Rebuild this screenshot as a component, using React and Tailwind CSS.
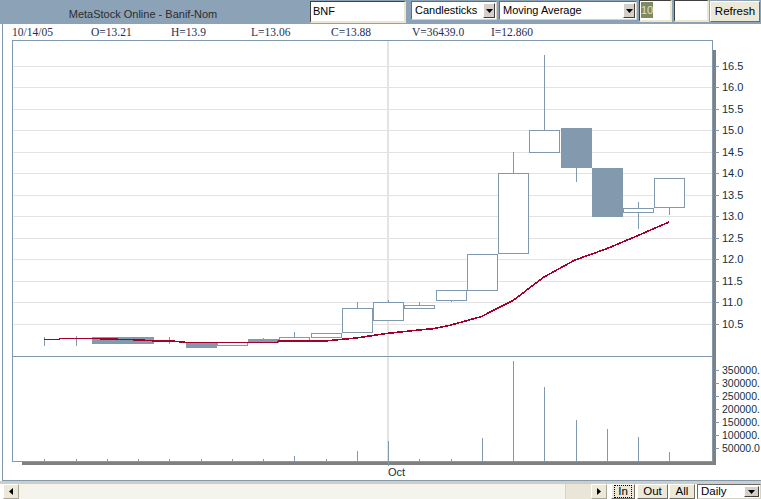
import React from "react";

const LINE = "#8099ae";
const FILL = "#8299ae";
const AX = "#12303f";

const X0 = 44.3;
const DX = 31.25;
const cx = (i) => X0 + DX * i;

const candles = [
  { t: "d", hi: 336.5, lo: 345.5 },
  { t: "d", hi: 336, lo: 345.5 },
  { t: "f", top: 337, bot: 342.7, lo: 343.7 },
  { t: "f", top: 337, bot: 342.7, lo: 343.7 },
  { t: "d", hi: 337, lo: 343.7 },
  { t: "f", top: 342, bot: 346.7, lo: 347.7 },
  { t: "h", top: 342.3, bot: 345.3 },
  { t: "f", top: 339, bot: 342.3, hi: 338 },
  { t: "h", top: 337, bot: 339.7, hi: 332 },
  { t: "h", top: 333.3, bot: 337.3 },
  { t: "h", top: 308.3, bot: 332.3, hi: 302.3 },
  { t: "h", top: 302.3, bot: 320.3, hi: 300 },
  { t: "h", top: 305.3, bot: 308.3, hi: 302.3 },
  { t: "h", top: 290.3, bot: 300.3, lo: 301.7 },
  { t: "h", top: 254, bot: 290.3 },
  { t: "h", top: 173.3, bot: 253, hi: 152 },
  { t: "h", top: 130, bot: 152.3, hi: 55 },
  { t: "f", top: 128, bot: 166.7, lo: 181.7 },
  { t: "f", top: 168, bot: 215.7, lo: 217 },
  { t: "h", top: 208.3, bot: 212.3, hi: 202, lo: 229.3 },
  { t: "h", top: 178, bot: 207.3, lo: 214.7 },
];

const volTops = [
  459, 459, 459, 459, 459, 459, 459, 459, 456, 459, 451, 441, 459, 459, 438,
  361, 387, 420, 429, 437, 452,
];

const ma = [
  [44, 339.3], [59, 339.3], [60, 338.3], [75, 338.3], [91, 338.3], [106, 339],
  [137, 339.8], [152, 340.7], [169, 340.7], [185, 342.3], [200, 342.3],
  [231, 342.3], [262, 342.3], [277, 342.3], [279, 341], [294, 341], [325, 341],
  [330, 340.5], [356, 338], [388, 333.3], [419, 330], [433, 328.7], [450, 325.3],
  [481, 316.7], [513, 300.5], [544, 277], [575, 260], [606, 249], [638, 235.5],
  [669, 222],
];

const priceLabels = ["16.5", "16.0", "15.5", "15.0", "14.5", "14.0", "13.5", "13.0", "12.5", "12.0", "11.5", "11.0", "10.5"];
const py = (p) => 216 - (p - 13) * 43;
const volLabels = ["350000.", "300000.", "250000.", "200000.", "150000.", "100000.", "50000.0"];

function Chart() {
  return (
    <svg width="749" height="440" viewBox="12 40 749 440" className="block" shapeRendering="crispEdges">
      {/* horizontal grid */}
      {priceLabels.map((p) => {
        const y = Math.round(py(parseFloat(p))) + 0.5;
        return <line key={"g" + p} x1={13} x2={712} y1={y} y2={y} stroke="#e3e3e3" strokeWidth="1" />;
      })}
      {/* vertical grid (Oct) */}
      <rect x="387" y="41" width="2" height="420" fill="#e4e4e4" />

      {/* volume bars */}
      {volTops.map((t, i) => {
        const x = Math.round(cx(i)) + 0.5;
        return <line key={"v" + i} x1={x} x2={x} y1={t} y2={461} stroke={LINE} strokeWidth="1" />;
      })}

      {/* candles */}
      {candles.map((c, i) => {
        const x = Math.round(cx(i)) + 0.5;
        const left = Math.round(cx(i) - 15) + 0.5;
        const els = [];
        if (c.t === "d") {
          els.push(<line key="w" x1={x} x2={x} y1={c.hi} y2={c.lo} stroke={LINE} strokeWidth="1" />);
        } else {
          if (c.hi !== undefined)
            els.push(<line key="hi" x1={x} x2={x} y1={c.hi} y2={c.top} stroke={LINE} strokeWidth="1" />);
          if (c.lo !== undefined)
            els.push(<line key="lo" x1={x} x2={x} y1={c.bot} y2={c.lo} stroke={LINE} strokeWidth="1" />);
          const top = Math.round(c.top) + 0.5;
          const bot = Math.round(c.bot) + 0.5;
          els.push(
            <rect
              key="b"
              x={left}
              y={top}
              width={30}
              height={Math.max(bot - top, 1)}
              fill={c.t === "f" ? FILL : "#ffffff"}
              stroke={LINE}
              strokeWidth="1"
            />
          );
        }
        return <g key={"c" + i}>{els}</g>;
      })}

      {/* moving average */}
      <polyline
        points={ma.map((p) => p.join(",")).join(" ")}
        fill="none"
        stroke="#a3002c"
        strokeWidth="1.6"
      />

      {/* frame */}
      <line x1="12" x2="713" y1="40.5" y2="40.5" stroke={LINE} />
      <line x1="12.5" x2="12.5" y1="40" y2="462" stroke={LINE} />
      <line x1="712.5" x2="712.5" y1="40" y2="462" stroke={LINE} />
      <line x1="12" x2="713" y1="461.5" y2="461.5" stroke={LINE} />
      <line x1="12" x2="713" y1="356.5" y2="356.5" stroke={LINE} />

      {/* shadow */}
      <rect x="713" y="50" width="3" height="415" fill="#808080" />
      <rect x="22" y="462" width="694" height="3" fill="#808080" />

      {/* price axis */}
      {priceLabels.map((p) => {
        const y = Math.round(py(parseFloat(p))) + 0.5;
        return (
          <g key={"p" + p}>
            <line x1="715" x2="719" y1={y} y2={y} stroke={LINE} />
            <text
              x="722"
              y={y - 1}
              fontSize="11"
              fontFamily="'Liberation Sans', Arial, sans-serif"
              fill={AX}
              dominantBaseline="central"
            >
              {p}
            </text>
          </g>
        );
      })}

      {/* volume axis */}
      {volLabels.map((l, k) => {
        const y = 461 - (7 - k) * 13 + 0.5;
        return (
          <g key={"vl" + k}>
            <line x1="715" x2="719" y1={y} y2={y} stroke={LINE} />
            <text
              x="722"
              y={y - 1}
              fontSize="10.5"
              fontFamily="'Liberation Sans', Arial, sans-serif"
              fill={AX}
              dominantBaseline="central"
            >
              {l}
            </text>
          </g>
        );
      })}

      {/* x axis */}
      <line x1="388.5" x2="388.5" y1="461" y2="466" stroke={LINE} />
      <text x="388" y="471.5" fontSize="11" fontFamily="'Liberation Sans', Arial, sans-serif" fill={AX} dominantBaseline="central">
        Oct
      </text>
    </svg>
  );
}

function DownArrow() {
  return (
    <svg width="7" height="4" viewBox="0 0 7 4" className="block">
      <path d="M0 0h7L3.5 4z" fill="#000" />
    </svg>
  );
}

function Select({ className, label }) {
  return (
    <div
      className={
        "flex items-stretch bg-white border border-t-[#6b6b6b] border-l-[#6b6b6b] border-b-[#d8d4c4] border-r-[#d8d4c4] " +
        className
      }
    >
      <div className="flex-1 pl-[3px] leading-[16px] text-black whitespace-nowrap overflow-hidden">{label}</div>
      <div className="w-[12px] my-[1px] mr-[1px] bg-[#d4d0c8] border border-t-white border-l-white border-b-[#404040] border-r-[#404040] flex items-center justify-center">
        <DownArrow />
      </div>
    </div>
  );
}

const inputCls =
  "bg-white border-t border-l border-r-2 border-b-2 border-t-[#404040] border-l-[#404040] border-r-[#ebe7d0] border-b-[#ebe7d0]";

const btnCls =
  "bg-[#ece9d8] border border-t-white border-l-white border-b-[#716f64] border-r-[#716f64] flex items-center justify-center text-black";

export default function App() {
  return (
    <div className="w-[761px] h-[499px] bg-white overflow-hidden font-['Liberation_Sans',Arial,sans-serif] text-[11px]">
      {/* top bar */}
      <div className="h-[24px] bg-[#8ba2b7] flex items-start">
        <div className="w-[286px] pt-[8px] text-center text-[#2d2d2d] leading-[13px]">MetaStock Online - Banif-Nom</div>
        <div className={"ml-[24px] mt-[1px] w-[96px] h-[22px] pl-[2px] leading-[19px] text-black " + inputCls}>BNF</div>
        <Select className="ml-[5px] mt-[1px] w-[86px] h-[19px]" label="Candlesticks" />
        <Select className="ml-[2px] mt-[1px] w-[138px] h-[19px]" label="Moving Average" />
        <div className={"ml-[2px] mt-0 w-[33px] h-[22px] pl-[1px] pt-[1px] flex items-start " + inputCls}>
          <span className="bg-[#7f8a62] text-[#dde3cc] leading-[16px] px-0">10</span>
        </div>
        <div className={"ml-[2px] mt-0 w-[35px] h-[22px] " + inputCls}></div>
        <div className={"ml-[1px] mt-[1px] w-[50px] h-[21px] text-[11.5px] " + btnCls}>Refresh</div>
      </div>

      {/* body */}
      <div className="ml-[2px] h-[457px] border-l border-b border-[#8099ae]">
        <div className="h-[16px] pl-[9px] flex font-['Liberation_Serif',serif] text-[11.5px] leading-[16px] text-[#1f2f4f] whitespace-nowrap">
          <div className="w-[79px]">10/14/05</div>
          <div className="w-[80px]">O=13.21</div>
          <div className="w-[80px]">H=13.9</div>
          <div className="w-[80px]">L=13.06</div>
          <div className="w-[81px]">C=13.88</div>
          <div className="w-[79px]">V=36439.0</div>
          <div className="w-[80px]">I=12.860</div>
        </div>
        <div className="ml-[9px]">
          <Chart />
        </div>
      </div>

      {/* gray strip */}
      <div className="h-[3px] bg-[#cfcdc4]"></div>

      {/* bottom bar */}
      <div className="h-[15px] flex items-stretch">
        <div className="ml-[3px] w-[604px] flex items-stretch bg-[#f4f3ec]">
          <div className="w-[16px] bg-[#ece9d8] border border-t-white border-l-white border-b-[#aca899] border-r-[#aca899] flex items-center justify-center">
            <svg width="4" height="7" viewBox="0 0 4 7" className="block">
              <path d="M4 0v7L0 3.5z" fill="#000" />
            </svg>
          </div>
          <div className="flex-1"></div>
          <div className="w-[26px] bg-[#e9e6d7] border-l border-[#d6d3c4]"></div>
          <div className="w-[16px] bg-[#ece9d8] border border-t-white border-l-white border-b-[#aca899] border-r-[#aca899] flex items-center justify-center">
            <svg width="4" height="7" viewBox="0 0 4 7" className="block">
              <path d="M0 0v7L4 3.5z" fill="#000" />
            </svg>
          </div>
        </div>
        <div className={"ml-[4px] w-[24px] " + btnCls}>
          <span className="border border-dotted border-black px-[3px] leading-[11px] text-[11.5px]">In</span>
        </div>
        <div className={"ml-[2px] w-[31px] text-[11.5px] " + btnCls}>Out</div>
        <div className={"ml-[1px] w-[26px] text-[11.5px] " + btnCls}>All</div>
        <div className="ml-[2px] flex-1 flex items-stretch bg-white border border-t-[#6b6b6b] border-l-[#6b6b6b] border-b-[#d8d4c4] border-r-[#d8d4c4]">
          <div className="flex-1 pl-[3px] leading-[13px] text-[11.5px] text-black">Daily</div>
          <div className="w-[15px] my-[1px] mr-[1px] bg-[#d4d0c8] border border-t-white border-l-white border-b-[#404040] border-r-[#404040] flex items-center justify-center">
            <DownArrow />
          </div>
        </div>
      </div>
    </div>
  );
}
